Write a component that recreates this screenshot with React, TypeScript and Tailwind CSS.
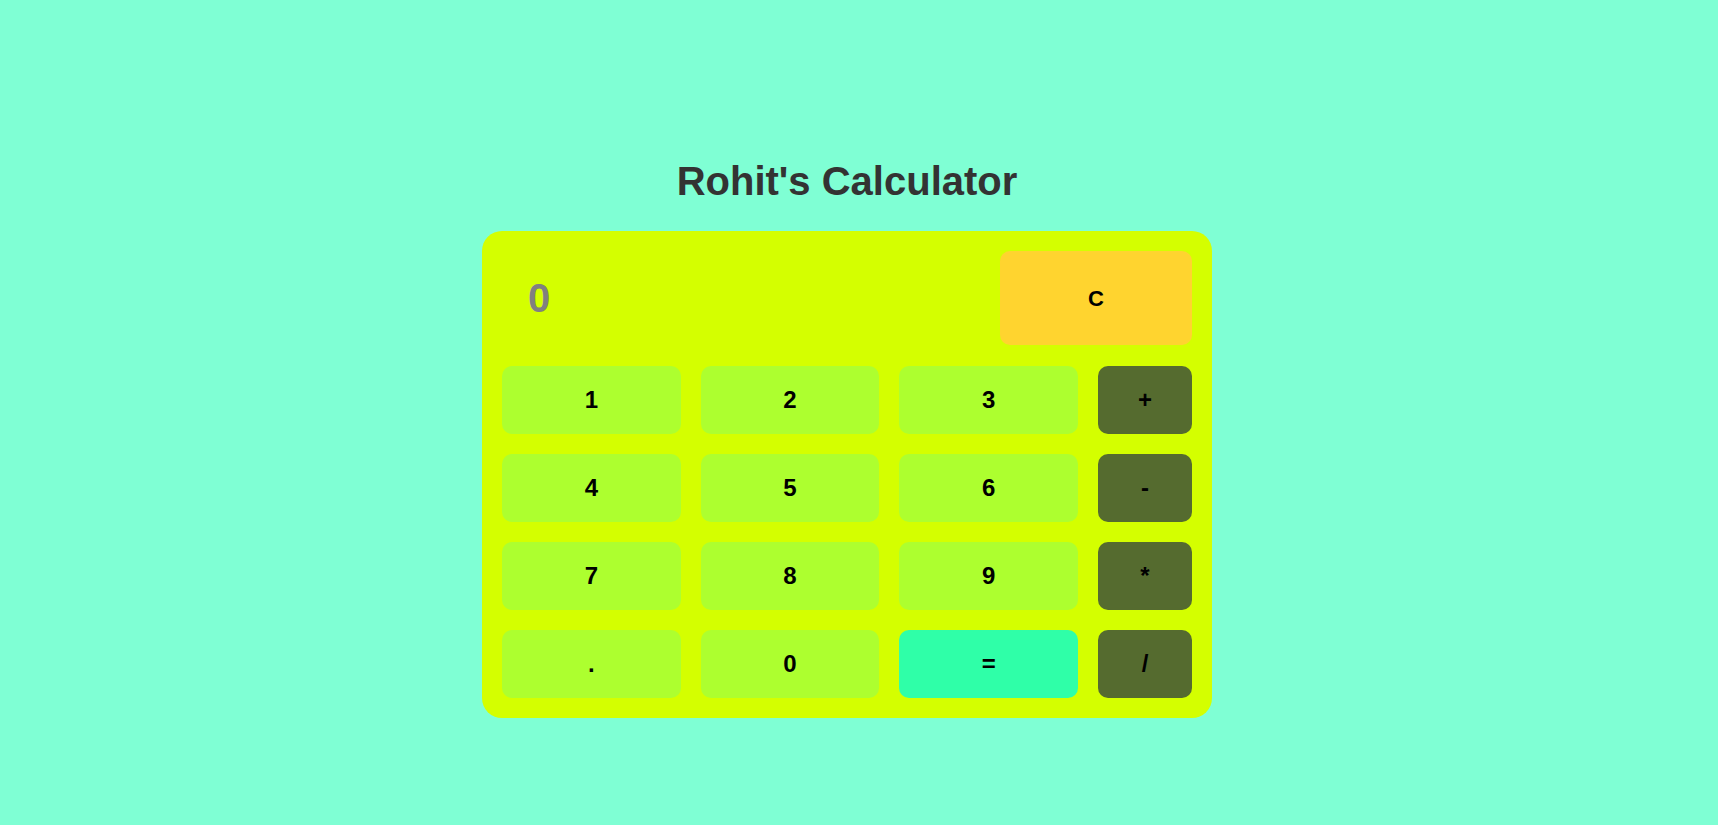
import React, { useState } from 'react';

const rows = [
  ['1', '2', '3', '+'],
  ['4', '5', '6', '-'],
  ['7', '8', '9', '*'],
  ['.', '0', '=', '/'],
];

const Calculator = () => {
  const [display, setDisplay] = useState('0');

  const press = (key: string) => {
    if (key === '=') {
      try {
        // eslint-disable-next-line no-new-func
        const result = Function(`return (${display})`)();
        setDisplay(String(result));
      } catch {
        setDisplay('Error');
      }
      return;
    }
    setDisplay((prev) => (prev === '0' || prev === 'Error' ? key : prev + key));
  };

  const keyClass = (key: string) => {
    if (key === '=') return 'bg-[#2fffa8]';
    if ('+-*/'.includes(key)) return 'bg-[#556b2f]';
    return 'bg-[#adff2f]';
  };

  return (
    <div className="bg-[#7fffd4] min-h-screen flex flex-col items-center pt-[158px] pr-[24px] font-['Liberation_Sans',Arial,sans-serif]">
      <h1 className="text-[40px] leading-[46px] font-bold text-[#333333] mb-[27px]">
        Rohit's Calculator
      </h1>

      <div className="w-[730px] bg-[#d4ff00] rounded-[20px] p-5 flex flex-col gap-[21px]">
        {/* Display + clear */}
        <div className="flex items-center">
          <div className="flex-1 pl-[26px] text-[40px] font-bold text-[#808080]">{display}</div>
          <button
            onClick={() => setDisplay('0')}
            className="w-[192px] h-[94px] rounded-[10px] bg-[#ffd42f] text-[22px] font-bold text-black"
          >
            C
          </button>
        </div>

        {/* Keypad */}
        <div className="grid grid-cols-[1fr_1fr_1fr_94px] gap-5">
          {rows.flat().map((key) => (
            <button
              key={key}
              onClick={() => press(key)}
              className={`h-[68px] rounded-[10px] text-[24px] font-bold text-black ${keyClass(key)}`}
            >
              {key}
            </button>
          ))}
        </div>
      </div>
    </div>
  );
};

export default Calculator;
